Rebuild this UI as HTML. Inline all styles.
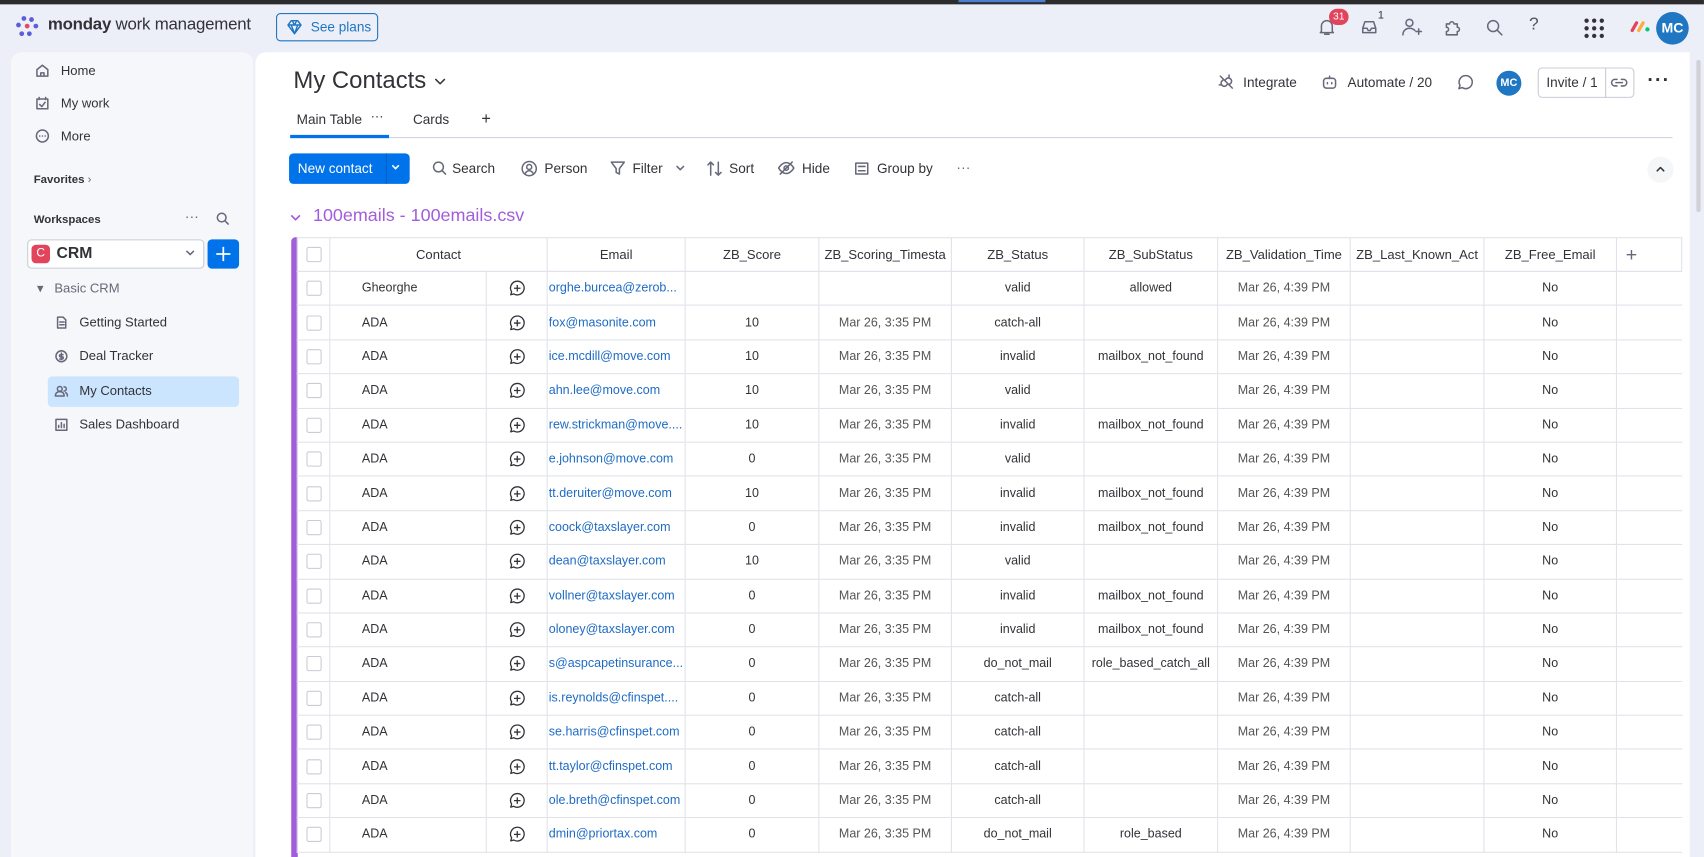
<!DOCTYPE html>
<html><head><meta charset="utf-8">
<style>
*{box-sizing:border-box;margin:0;padding:0}
html,body{width:1704px;height:855px;overflow:hidden;background:#eceff8;font-family:"Liberation Sans",sans-serif;color:#323338}
#w{position:absolute;left:0;top:0;width:1568px;height:787px;transform:scale(1.0867,1.0878);transform-origin:0 0;background:#eceff8}
.a{position:absolute}
.ic{stroke:#676879;fill:none;stroke-width:1.4;stroke-linecap:round;stroke-linejoin:round}
.side div.it{position:absolute;left:22px;font-size:12px;color:#323338;display:flex;align-items:center;gap:10px}
table{border-collapse:collapse;table-layout:fixed;font-size:11.5px}
td{border:1px solid #e1e3ea;height:31.4px;text-align:center;white-space:nowrap;overflow:hidden;color:#323338;padding:0 2px}
tr.h td{height:31px;color:#323338;font-size:12px}
td.em{color:#1f6bc4;text-align:left;padding-left:1px}
.cb{display:inline-block;width:14px;height:14px;border:1px solid #c9ccd6;border-radius:2px;vertical-align:middle}
td.tm{color:#555}
</style></head><body><div id="w">
<div class="a" style="left:0;top:0;width:1568px;height:4px;background:#2c2c2e"></div>
<div class="a" style="left:882px;top:0;width:80px;height:2px;background:#4a7fd4"></div>
<svg class="a" style="left:13px;top:13px" width="24" height="24" viewBox="0 0 24 24"><g fill="#5a5fd6"><circle cx="4" cy="10" r="2.2"/><circle cx="9" cy="4" r="2.2"/><circle cx="16" cy="5" r="2.2"/><circle cx="20" cy="11" r="2.2"/><circle cx="7" cy="18" r="2.2"/><circle cx="14" cy="18" r="2.2"/></g><circle cx="12" cy="11" r="2.2" fill="#e44a6d"/></svg>
<div class="a" style="left:44px;top:14px;font-size:15.5px;color:#323338;letter-spacing:-0.2px"><b style="font-weight:700">monday</b> work management</div>
<div class="a" style="left:254px;top:12px;width:94px;height:26px;border:1px solid #1f76c2;border-radius:4px;color:#1f76c2;font-size:12.5px;display:flex;align-items:center;padding-left:31px">See plans</div>
<svg class="a" style="left:263px;top:17px" width="16" height="16" viewBox="0 0 16 16"><path d="M2 6l3-4h6l3 4-6 8z M2 6h12 M6 2l2 4 2-4 M5 6l3 8 3-8" fill="none" stroke="#1f76c2" stroke-width="1.3" stroke-linejoin="round"/></svg>
<svg class="a" style="left:1212px;top:16px" width="18" height="18" viewBox="0 0 18 18"><path class="ic" d="M4 13V8a5 5 0 0110 0v5l1 1H3z M7 15.5h4"/></svg>
<div class="a" style="left:1223px;top:8px;width:18px;height:15px;border-radius:8px;background:#e2445c;color:#fff;font-size:9.5px;text-align:center;line-height:15px">31</div>
<svg class="a" style="left:1251px;top:16px" width="18" height="18" viewBox="0 0 18 18"><path class="ic" d="M3 10l2-6h8l2 6v4H3z M3 10h4l1 2h2l1-2h4"/></svg>
<div class="a" style="left:1268px;top:9px;font-size:10px">1</div>
<svg class="a" style="left:1289px;top:15px" width="20" height="20" viewBox="0 0 20 20"><circle class="ic" cx="8" cy="6" r="3.2"/><path class="ic" d="M2 17c0-4 3-6 6-6s4 1 5 2 M14 14h5 M16.5 11.5v5"/></svg>
<svg class="a" style="left:1327px;top:15px" width="20" height="20" viewBox="0 0 20 20"><path class="ic" d="M4 7h3a2 2 0 114 0h3v3a2 2 0 110 4v3H4v-3a2 2 0 100-4z"/></svg>
<svg class="a" style="left:1366px;top:16px" width="18" height="18" viewBox="0 0 18 18"><circle class="ic" cx="8" cy="8" r="5"/><path class="ic" d="M12 12l4 4"/></svg>
<div class="a" style="left:1407px;top:14px;font-size:16px;color:#555">?</div>
<svg class="a" style="left:1457px;top:16px" width="20" height="20" viewBox="0 0 20 20"><g fill="#323338"><circle cx="3" cy="3" r="2"/><circle cx="10" cy="3" r="2"/><circle cx="17" cy="3" r="2"/><circle cx="3" cy="10" r="2"/><circle cx="10" cy="10" r="2"/><circle cx="17" cy="10" r="2"/><circle cx="3" cy="17" r="2"/><circle cx="10" cy="17" r="2"/><circle cx="17" cy="17" r="2"/></g></svg>
<svg class="a" style="left:1500px;top:18px" width="20" height="12" viewBox="0 0 20 12"><path d="M2 10l4-7" stroke="#e2445c" stroke-width="3" stroke-linecap="round"/><path d="M8 10l4-7" stroke="#fdab3d" stroke-width="3" stroke-linecap="round"/><circle cx="16" cy="9" r="2" fill="#00c875"/></svg>
<div class="a" style="left:1524px;top:11px;width:30px;height:30px;border-radius:50%;background:#1f76c2;color:#fff;font-size:13px;font-weight:bold;text-align:center;line-height:30px">MC</div>
<div class="a side" style="left:10px;top:48px;width:223px;height:740px;background:#f6f7fb;border-radius:10px 10px 0 0">
 <div class="it" style="top:10px"><svg width="14" height="14" viewBox="0 0 14 14"><path class="ic" d="M2 6l5-4 5 4v6H2z M5.5 12V9h3v3"/></svg>Home</div>
 <div class="it" style="top:40px"><svg width="14" height="14" viewBox="0 0 14 14"><path class="ic" d="M2 3h10v9H2z M4 1.5v2 M10 1.5v2 M4.5 8l2 2 3-4"/></svg>My work</div>
 <div class="it" style="top:70px"><svg width="14" height="14" viewBox="0 0 14 14"><circle class="ic" cx="7" cy="7" r="5.5"/><path class="ic" d="M4.5 7h.1M7 7h.1M9.5 7h.1"/></svg>More</div>
 <div class="a" style="left:21px;top:111px;font-size:10.5px;font-weight:bold">Favorites <span style="font-weight:normal;color:#676879">›</span></div>
 <div class="a" style="left:21px;top:148px;font-size:10.5px;font-weight:bold">Workspaces</div>
 <div class="a" style="left:160px;top:143px;font-size:13px;color:#676879">···</div>
 <svg class="a" style="left:188px;top:146px" width="14" height="14" viewBox="0 0 14 14"><circle class="ic" cx="6" cy="6" r="4"/><path class="ic" d="M9 9l3 3"/></svg>
 <div class="a" style="left:15px;top:172px;width:163px;height:27px;border:1px solid #c9ccd6;border-radius:4px;background:#fff"></div>
 <div class="a" style="left:19px;top:177px;width:17px;height:17px;border-radius:4px;background:#e2445c;color:#fff;font-size:11px;text-align:center;line-height:17px">C</div>
 <div class="a" style="left:42px;top:177px;font-size:14.5px;font-weight:bold">CRM</div>
 <svg class="a" style="left:160px;top:181px" width="10" height="8" viewBox="0 0 10 8"><path class="ic" d="M2 2l3 3 3-3"/></svg>
 <div class="a" style="left:181px;top:172px;width:29px;height:27px;border-radius:4px;background:#0073ea"></div>
 <svg class="a" style="left:187px;top:177px" width="17" height="17" viewBox="0 0 17 17"><path d="M8.5 2v13M2 8.5h13" stroke="#fff" stroke-width="1.6"/></svg>
 <div class="a" style="left:24px;top:210px;font-size:12px;color:#676879">▾&nbsp;&nbsp; Basic CRM</div>
 <div class="it" style="left:40px;top:241px"><svg width="13" height="13" viewBox="0 0 13 13"><path class="ic" d="M3 1.5h5l2.5 2.5v7.5H3z M5 6h4M5 8.5h4"/></svg>Getting Started</div>
 <div class="it" style="left:40px;top:272px"><svg width="13" height="13" viewBox="0 0 13 13"><circle class="ic" cx="6.5" cy="6.5" r="5"/><path class="ic" d="M6.5 3.5v6M8 5H5.8a1 1 0 000 2h1.4a1 1 0 010 2H5"/></svg>Deal Tracker</div>
 <div class="a" style="left:34px;top:298px;width:176px;height:28px;background:#cce5ff;border-radius:4px"></div>
 <div class="it" style="left:40px;top:304px"><svg width="13" height="13" viewBox="0 0 13 13"><circle class="ic" cx="5" cy="4.5" r="2.2"/><path class="ic" d="M1 11c0-3 2-4 4-4s4 1 4 4z M9 2.5a2 2 0 010 4 M10.5 8c1 .5 1.5 1.5 1.5 3"/></svg>My Contacts</div>
 <div class="it" style="left:40px;top:335px"><svg width="13" height="13" viewBox="0 0 13 13"><path class="ic" d="M1.5 1.5h10v10h-10z M4 9V7 M6.5 9V4.5 M9 9V6"/></svg>Sales Dashboard</div>
</div>
<div class="a" style="left:235px;top:48px;width:1320px;height:740px;background:#fff;border-radius:10px 0 0 0"></div>
<div class="a" style="left:1561px;top:55px;width:4px;height:140px;background:#d0d2d8;border-radius:2px"></div>
<div class="a" style="left:270px;top:61px;font-size:22px;color:#323338">My Contacts <svg width="14" height="10" viewBox="0 0 14 10" style="vertical-align:middle"><path class="ic" d="M3 3l4 4 4-4" style="stroke:#323338"/></svg></div>
<svg class="a" style="left:1120px;top:67px" width="17" height="17" viewBox="0 0 17 17"><path class="ic" d="M3 3l11 11 M6 6l-2 2a3 3 0 004 4l2-2 M11 11l2-2a3 3 0 00-4-4L7 7 M2 11l2 0 M11 2v2"/></svg>
<div class="a" style="left:1144px;top:69px;font-size:12.5px">Integrate</div>
<svg class="a" style="left:1215px;top:67px" width="17" height="17" viewBox="0 0 17 17"><rect class="ic" x="3" y="5" width="11" height="9" rx="2.5"/><path class="ic" d="M8.5 3v2 M6.5 9v1 M10.5 9v1"/></svg>
<div class="a" style="left:1240px;top:69px;font-size:12.5px">Automate / 20</div>
<svg class="a" style="left:1340px;top:67px" width="17" height="17" viewBox="0 0 17 17"><path class="ic" d="M8.5 2.5a6 6 0 11-3 11l-3 1 1-3a6 6 0 015-9z"/></svg>
<div class="a" style="left:1377px;top:65px;width:23px;height:23px;border-radius:50%;background:#1f76c2;color:#fff;font-size:10px;font-weight:bold;text-align:center;line-height:23px">MC</div>
<div class="a" style="left:1415px;top:62px;width:89px;height:28px;border:1px solid #c9ccd6;border-radius:4px"></div>
<div class="a" style="left:1477px;top:62px;width:1px;height:28px;background:#c9ccd6"></div>
<div class="a" style="left:1423px;top:69px;font-size:12.5px">Invite / 1</div>
<svg class="a" style="left:1482px;top:69px" width="16" height="14" viewBox="0 0 16 14"><path class="ic" d="M6 4H4a3 3 0 000 6h2 M10 4h2a3 3 0 010 6h-2 M5 7h6"/></svg>
<div class="a" style="left:1516px;top:63px;font-size:18px;font-weight:bold;letter-spacing:1px">···</div>
<div class="a" style="left:273px;top:103px;font-size:12.5px">Main Table</div>
<div class="a" style="left:341px;top:100px;font-size:12px">···</div>
<div class="a" style="left:380px;top:103px;font-size:12.5px">Cards</div>
<div class="a" style="left:443px;top:101px;font-size:15px">+</div>
<div class="a" style="left:267px;top:126px;width:1272px;height:1px;background:#d0d4e4"></div>
<div class="a" style="left:267px;top:124px;width:91px;height:3px;background:#0073ea"></div>
<div class="a" style="left:266px;top:141px;width:111px;height:28px;background:#0073ea;border-radius:4px;color:#fff;font-size:12.5px;padding:7px 0 0 8px">New contact</div>
<div class="a" style="left:355px;top:141px;width:1px;height:28px;background:#0060c0"></div>
<svg class="a" style="left:359px;top:150px" width="10" height="8" viewBox="0 0 10 8"><path d="M2 2l3 3 3-3" stroke="#fff" fill="none" stroke-width="1.5"/></svg>
<svg class="a" style="left:397px;top:147px" width="15" height="15" viewBox="0 0 15 15"><circle class="ic" cx="6.5" cy="6.5" r="4.5"/><path class="ic" d="M10 10l3 3"/></svg>
<div class="a" style="left:416px;top:148px;font-size:12.5px">Search</div>
<svg class="a" style="left:479px;top:147px" width="16" height="16" viewBox="0 0 16 16"><circle class="ic" cx="8" cy="8" r="6.5"/><circle class="ic" cx="8" cy="6.5" r="2.3"/><path class="ic" d="M4 13c1-2 2.5-3 4-3s3 1 4 3"/></svg>
<div class="a" style="left:501px;top:148px;font-size:12.5px">Person</div>
<svg class="a" style="left:561px;top:147px" width="15" height="15" viewBox="0 0 15 15"><path class="ic" d="M1.5 2h12l-4.5 6v5l-3-1.5V8z"/></svg>
<div class="a" style="left:582px;top:148px;font-size:12.5px">Filter</div>
<svg class="a" style="left:621px;top:151px" width="10" height="8" viewBox="0 0 10 8"><path class="ic" d="M2 2l3 3 3-3"/></svg>
<svg class="a" style="left:650px;top:147px" width="15" height="16" viewBox="0 0 15 16"><path class="ic" d="M4 14V2 M1.5 4.5L4 2l2.5 2.5 M11 2v12 M8.5 11.5L11 14l2.5-2.5"/></svg>
<div class="a" style="left:671px;top:148px;font-size:12.5px">Sort</div>
<svg class="a" style="left:715px;top:147px" width="17" height="15" viewBox="0 0 17 15"><path class="ic" d="M1.5 7.5s3-5 7-5 7 5 7 5-3 5-7 5-7-5-7-5z M3 13L14 2"/><circle class="ic" cx="8.5" cy="7.5" r="2"/></svg>
<div class="a" style="left:738px;top:148px;font-size:12.5px">Hide</div>
<svg class="a" style="left:786px;top:148px" width="14" height="14" viewBox="0 0 14 14"><rect class="ic" x="1.5" y="2" width="11" height="10"/><path class="ic" d="M4 5h6M4 9h6"/></svg>
<div class="a" style="left:807px;top:148px;font-size:12.5px">Group by</div>
<div class="a" style="left:880px;top:146px;font-size:13px;color:#676879">···</div>
<div class="a" style="left:1516px;top:144px;width:24px;height:24px;border-radius:50%;background:#f5f6f8"></div>
<svg class="a" style="left:1523px;top:151px" width="10" height="8" viewBox="0 0 10 8"><path class="ic" d="M2 6l3-3 3 3" style="stroke:#323338"/></svg>
<svg class="a" style="left:266px;top:195px" width="12" height="10" viewBox="0 0 12 10"><path d="M2 3l4 4 4-4" stroke="#a25ddc" fill="none" stroke-width="1.5"/></svg>
<div class="a" style="left:288px;top:189px;font-size:16.5px;color:#a25ddc;font-weight:500">100emails - 100emails.csv</div>
<div class="a" style="left:268px;top:218px;width:6px;height:570px;background:#a25ddc;border-radius:4px 0 0 0"></div>
<table class="a" style="left:273px;top:218px;width:1274px">
<colgroup><col style="width:30px"><col style="width:144px"><col style="width:56px"><col style="width:127px"><col style="width:123px"><col style="width:122px"><col style="width:122px"><col style="width:123px"><col style="width:122px"><col style="width:123px"><col style="width:122px"><col style="width:60px"></colgroup>
<tr class="h"><td><span class="cb"></span></td><td colspan="2" style="border-right:1px solid #e1e3ea">Contact</td><td>Email</td><td>ZB_Score</td><td>ZB_Scoring_Timesta</td><td>ZB_Status</td><td>ZB_SubStatus</td><td>ZB_Validation_Time</td><td>ZB_Last_Known_Act</td><td>ZB_Free_Email</td><td style="font-size:18px;color:#676879;text-align:left;padding-left:8px">+</td></tr>
</table>
<table class="a" id="t" style="left:273px;top:249px;width:1274px">
<colgroup><col style="width:30px"><col style="width:144px"><col style="width:56px"><col style="width:127px"><col style="width:123px"><col style="width:122px"><col style="width:122px"><col style="width:123px"><col style="width:122px"><col style="width:123px"><col style="width:122px"><col style="width:60px"></colgroup>
<tbody id="tb"></tbody></table>
<script>
var R=[["Gheorghe","orghe.burcea@zerob...","","","valid","allowed"],
["ADA","fox@masonite.com","10","1","catch-all",""],
["ADA","ice.mcdill@move.com","10","1","invalid","mailbox_not_found"],
["ADA","ahn.lee@move.com","10","1","valid",""],
["ADA","rew.strickman@move....","10","1","invalid","mailbox_not_found"],
["ADA","e.johnson@move.com","0","1","valid",""],
["ADA","tt.deruiter@move.com","10","1","invalid","mailbox_not_found"],
["ADA","coock@taxslayer.com","0","1","invalid","mailbox_not_found"],
["ADA","dean@taxslayer.com","10","1","valid",""],
["ADA","vollner@taxslayer.com","0","1","invalid","mailbox_not_found"],
["ADA","oloney@taxslayer.com","0","1","invalid","mailbox_not_found"],
["ADA","s@aspcapetinsurance...","0","1","do_not_mail","role_based_catch_all"],
["ADA","is.reynolds@cfinspet....","0","1","catch-all",""],
["ADA","se.harris@cfinspet.com","0","1","catch-all",""],
["ADA","tt.taylor@cfinspet.com","0","1","catch-all",""],
["ADA","ole.breth@cfinspet.com","0","1","catch-all",""],
["ADA","dmin@priortax.com","0","1","do_not_mail","role_based"]];
var ic='<svg width="16" height="16" viewBox="0 0 16 16"><path d="M8 1.5a6.3 6.3 0 11-3.2 11.7L2 14l.8-2.8A6.3 6.3 0 018 1.5z M8 5v6 M5 8h6" fill="none" stroke="#323338" stroke-width="1.2" stroke-linejoin="round"/></svg>';
var h='';R.forEach(function(r){h+='<tr><td><span class="cb"></span></td><td style="text-align:left;padding-left:29px">'+r[0]+'</td><td style="padding-top:3px">'+ic+'</td><td class="em">'+r[1]+'</td><td>'+r[2]+'</td><td class="tm">'+(r[3]?'Mar 26, 3:35 PM':'')+'</td><td>'+r[4]+'</td><td>'+r[5]+'</td><td class="tm">Mar 26, 4:39 PM</td><td></td><td>No</td><td style="border-right:none"></td></tr>'});
document.getElementById('tb').innerHTML=h;
</script>
</div></body></html>
